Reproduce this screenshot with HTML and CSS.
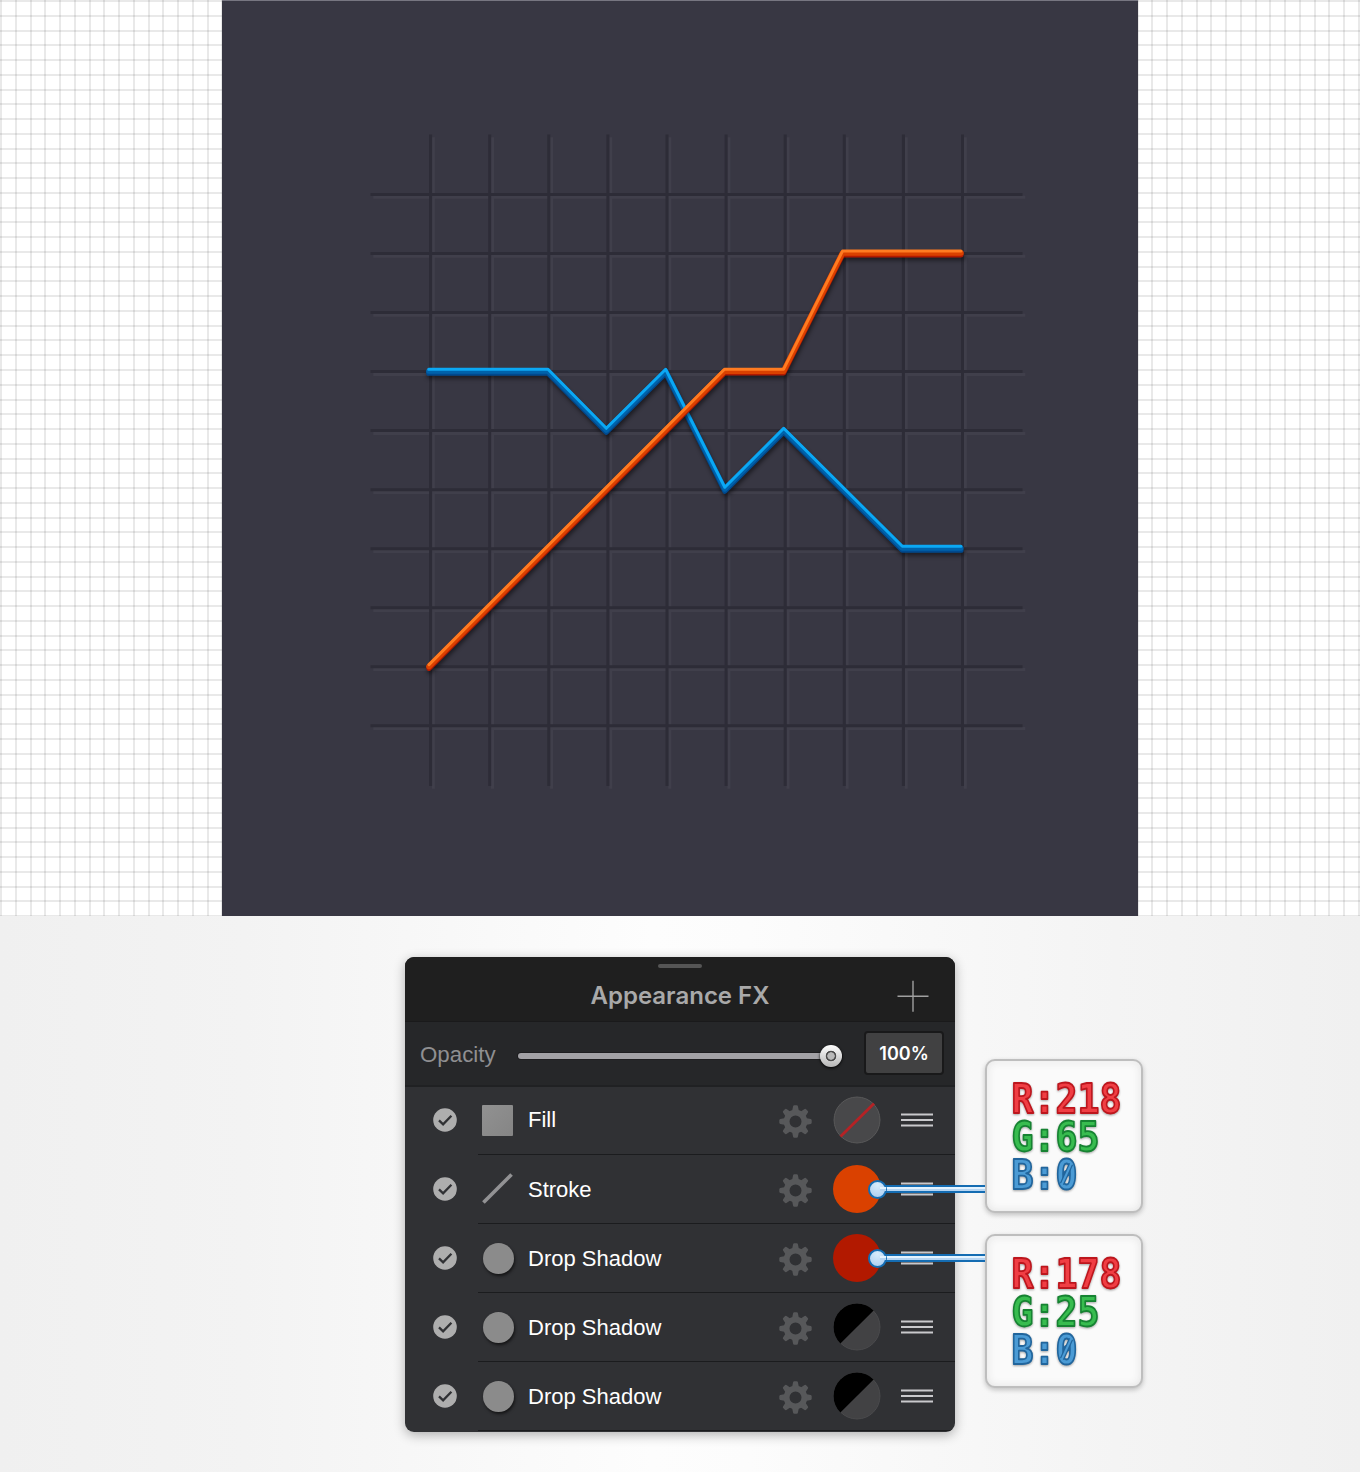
FILE: index.html
```html
<!DOCTYPE html>
<html lang="en">
<head>
<meta charset="utf-8">
<title>Appearance FX</title>
<link rel="stylesheet" href="styles.css">
</head>
<body>
<svg class="defs" width="0" height="0" aria-hidden="true">
  <defs>
    <symbol id="check" viewBox="0 0 24 24"><circle cx="12" cy="12" r="11.8" fill="#aeaeae"/><path d="M6 12.4l4.1 4 8.3-8.6" fill="none" stroke="#303134" stroke-width="2.3"/></symbol>
    <symbol id="gear" viewBox="-16.5 -16.5 33 33">
      <g fill="#57585a">
        <path id="tooth" d="M-3.5-10L-2.4-15.2Q-2.2-16.2-1.2-16.2H1.2Q2.2-16.2 2.4-15.2L3.5-10Z"/>
        <use href="#tooth" transform="rotate(45)"/><use href="#tooth" transform="rotate(90)"/><use href="#tooth" transform="rotate(135)"/><use href="#tooth" transform="rotate(180)"/><use href="#tooth" transform="rotate(225)"/><use href="#tooth" transform="rotate(270)"/><use href="#tooth" transform="rotate(315)"/>
      </g>
      <circle r="8.9" fill="none" stroke="#57585a" stroke-width="5.8"/>
    </symbol>
    <symbol id="grip" viewBox="0 0 32 14"><path d="M0 1.5h32M0 7h32M0 12.5h32" stroke="#c9c9cc" stroke-width="2"/></symbol>
    <symbol id="half" viewBox="0 0 48 48"><circle cx="24" cy="24" r="23" fill="#424244" stroke="#4b4b4d"/><path d="M7.4 40.6A23 23 0 0 1 40.6 7.4Z" fill="#000"/></symbol>
  </defs>
</svg>

<section class="canvas">
  <svg class="artboard" viewBox="222 0 916 916">
    <defs>
      <path id="grid" d="M430.6 134.5V786M489.7 134.5V786M548.8 134.5V786M607.9 134.5V786M667 134.5V786M726.1 134.5V786M785.2 134.5V786M844.3 134.5V786M903.4 134.5V786M962.5 134.5V786M370.5 194.4H1022.5M370.5 253.5H1022.5M370.5 312.5H1022.5M370.5 371.6H1022.5M370.5 430.6H1022.5M370.5 489.7H1022.5M370.5 548.7H1022.5M370.5 607.8H1022.5M370.5 666.8H1022.5M370.5 725.8H1022.5"/>
      <path id="blue" d="M428.7 370.5H548L606.3 429.5L665.7 370.500L724.8 488.5L783.7 429.5L902.3 547.5H961"/>
      <path id="orange" d="M429 665.8L724.5 370.500H783.5L842.5 252.300H961"/>
      <filter id="soft" x="-10%" y="-10%" width="120%" height="125%"><feGaussianBlur stdDeviation="2"/></filter>
    </defs>
    <path d="M222 .5H1138" stroke="#777681"/>
    <g class="grid-lines">
      <use href="#grid" x="2.8" y="2.8" stroke="#403f4b"/>
      <use href="#grid" stroke="#2d2c37"/>
    </g>
    <g class="series">
      <use href="#blue" y="5" x="1" stroke="#000" stroke-width="6" opacity=".5" filter="url(#soft)"/>
      <use href="#blue" y="2.7" stroke="#00498e" stroke-width="5.2"/>
      <use href="#blue" y=".6" stroke="#0062aa" stroke-width="5.2"/>
      <use href="#blue" y="-1.2" stroke="#0ba8f4" stroke-width="3"/>
    </g>
    <g class="series">
      <use href="#orange" y="5" x="1" stroke="#000" stroke-width="6" opacity=".5" filter="url(#soft)"/>
      <use href="#orange" y="2.5" stroke="#b21900" stroke-width="5.2"/>
      <use href="#orange" y=".7" stroke="#da4100" stroke-width="5.6"/>
      <use href="#orange" y="-1.2" stroke="#ff7b21" stroke-width="3"/>
    </g>
  </svg>
</section>

<main class="stage">
  <section class="panel">
    <header class="panel-head">
      <i class="handle"></i>
      <h1>Appearance FX</h1>
      <svg class="add" viewBox="0 0 32 32"><path d="M.5 16.2h31M16 .7v31" stroke="#a0a0a0" stroke-width="1.4"/></svg>
    </header>
    <div class="opacity">
      <span class="opacity-label">Opacity</span>
      <div class="slider"><i class="knob"></i></div>
      <span class="value">100%</span>
    </div>
    <ul class="effects">
      <li><svg class="check"><use href="#check"/></svg><div class="effect"><i class="sample square"></i><span>Fill</span><svg class="gear"><use href="#gear"/></svg><svg class="swatch" viewBox="0 0 48 48"><circle cx="24" cy="24" r="23" fill="#48484a" stroke="#59595a"/><path d="M7.5 40.5L41 7.5" stroke="#b52225" stroke-width="2.8"/></svg><svg class="grip"><use href="#grip"/></svg></div></li>
      <li><svg class="check"><use href="#check"/></svg><div class="effect"><svg class="sample" viewBox="0 0 32 32"><path d="M1.5 30.5L30.5 1.5" stroke="#929294" stroke-width="3.8"/></svg><span>Stroke</span><svg class="gear"><use href="#gear"/></svg><i class="swatch orange"></i><svg class="grip"><use href="#grip"/></svg></div></li>
      <li><svg class="check"><use href="#check"/></svg><div class="effect"><i class="sample disc"></i><span>Drop Shadow</span><svg class="gear"><use href="#gear"/></svg><i class="swatch red"></i><svg class="grip"><use href="#grip"/></svg></div></li>
      <li><svg class="check"><use href="#check"/></svg><div class="effect"><i class="sample disc"></i><span>Drop Shadow</span><svg class="gear"><use href="#gear"/></svg><svg class="swatch"><use href="#half"/></svg><svg class="grip"><use href="#grip"/></svg></div></li>
      <li><svg class="check"><use href="#check"/></svg><div class="effect"><i class="sample disc"></i><span>Drop Shadow</span><svg class="gear"><use href="#gear"/></svg><svg class="swatch"><use href="#half"/></svg><svg class="grip"><use href="#grip"/></svg></div></li>
    </ul>
  </section>

  <div class="callout first">
    <i class="leader"></i>
    <svg class="rgb" viewBox="0 0 154 150">
      <text class="r" x="24.5" y="51.5" textLength="110" lengthAdjust="spacingAndGlyphs">R:218</text>
      <text class="g" x="24.5" y="89.5" textLength="88" lengthAdjust="spacingAndGlyphs">G:65</text>
      <text class="b" x="24.5" y="127.5" textLength="66" lengthAdjust="spacingAndGlyphs">B:0</text>
      <path class="zero-edge" d="M75 123L84 103"/><path class="zero" d="M74.500 124L84.500 102"/>
    </svg>
  </div>
  <div class="callout second">
    <i class="leader"></i>
    <svg class="rgb" viewBox="0 0 154 150">
      <text class="r" x="24.5" y="51.5" textLength="110" lengthAdjust="spacingAndGlyphs">R:178</text>
      <text class="g" x="24.5" y="89.5" textLength="88" lengthAdjust="spacingAndGlyphs">G:25</text>
      <text class="b" x="24.5" y="127.5" textLength="66" lengthAdjust="spacingAndGlyphs">B:0</text>
      <path class="zero-edge" d="M75 123L84 103"/><path class="zero" d="M74.500 124L84.500 102"/>
    </svg>
  </div>
</main>
</body>
</html>
```
FILE: styles.css
```css
* { box-sizing: border-box; }
body { margin: 0; width: 1360px; font-family: "Liberation Sans", Arial, sans-serif; }
.defs { position: absolute; }

.canvas {
  height: 916px;
  display: flex;
  justify-content: center;
  background:
    repeating-linear-gradient(90deg, rgba(0,0,0,.085) 0 2px, transparent 2px 14.76px),
    repeating-linear-gradient(180deg, rgba(0,0,0,.085) 0 2px, transparent 2px 14.76px),
    #fff;
}
.artboard { width: 916px; height: 916px; background: #383743; }
.grid-lines { fill: none; stroke-width: 3; }
.series { fill: none; stroke-linecap: round; stroke-linejoin: round; }

.stage {
  position: relative;
  height: 556px;
  display: flex;
  justify-content: center;
  align-items: flex-start;
  padding-top: 41px;
  background: linear-gradient(90deg, #f0f0f0 0%, #f3f3f3 18%, #fdfdfd 48%, #fcfcfc 55%, #f4f4f4 82%, #f0f0f0 100%);
}
.panel {
  width: 550px;
  height: 474.5px;
  border-radius: 9px;
  overflow: hidden;
  background: #303134;
  box-shadow: 0 3px 12px rgba(0,0,0,.3);
}
.panel-head {
  height: 65px;
  display: grid;
  grid-template-columns: 1fr auto 1fr;
  grid-template-rows: 11px 1fr;
  align-items: center;
  background: #1f1f1f;
  border-bottom: 1px solid #1a1a1b;
}
.handle { grid-column: 1 / -1; justify-self: center; width: 44px; height: 4px; margin-top: 6px; border-radius: 2px; background: #555; }
.panel-head h1 { grid-column: 2; margin: 0; padding-top: 3px; font: 600 24px/30px Inter, sans-serif; color: #a9a9a9; }
.add { width: 32px; height: 32px; justify-self: end; margin-right: 26px; margin-top: 3px; }

.opacity { height: 64.5px; display: flex; align-items: center; padding: 2px 11px 0 15px; background: #262729; border-bottom: 2px solid #202123; }
.opacity-label { width: 98px; padding-top: 2px; font-size: 22.3px; color: #8f8f91; }
.slider { width: 324px; height: 6px; margin-top: 3px; border-radius: 3px; background: #a2a1a5; box-shadow: 0 0 0 1px #1d1d1f; display: flex; justify-content: flex-end; align-items: center; }
.knob { flex: none; width: 22px; height: 22px; border-radius: 50%; background: radial-gradient(circle, #b9b9b9 0 3.4px, #4c4c4c 4px 5px, transparent 5.6px), linear-gradient(#fff, #b6b6b6); box-shadow: 0 1px 3px #000; }
.value { width: 80px; height: 44px; margin-left: auto; margin-top: -2px; border: 2px solid #19191a; border-radius: 4px; background: #414142; color: #fff; font: 600 18px/41px Inter, sans-serif; text-align: center; }

.effects { margin: 0; padding: 0; list-style: none; }
.effects li { height: 69px; display: flex; align-items: center; padding-left: 27.5px; }
.effects li:first-child { height: 68px; }
.check { width: 24px; height: 24px; margin: -1px 21.5px 0 0; }
.effect { flex: 1; height: 100%; display: flex; align-items: center; padding: 0 22px 0 4px; border-bottom: 1px solid #1b1c1e; color: #fff; font-size: 22px; }
.effect span { flex: 1; margin-left: 15px; padding-top: 2px; }
li:first-child .effect span { padding-top: 0; }
.sample { width: 31px; height: 31px; }
.square { background: linear-gradient(135deg, #919191, #858585); border-radius: 1px; }
.disc { border-radius: 50%; background: #8b8b8b; margin: 1px -.5px 0 .5px; box-shadow: 1px 2px 3px #151516; }
.gear { width: 33px; height: 33px; margin: 3px 21px 0 0; }
.swatch { width: 48px; height: 48px; margin: 0 20px 0 0; border-radius: 50%; }
.orange { background: #da4100; }
.red { background: #b21900; }
.grip { width: 32px; height: 14px; }

.callout {
  position: absolute;
  left: 985px;
  width: 158px;
  height: 154px;
  border: 2px solid #bebebe;
  border-radius: 10px;
  background: #fafafa;
  box-shadow: inset 0 0 8px #e2e2e2, inset 0 2px 2px #fff, 0 2px 5px rgba(0,0,0,.22);
}
.first { top: 143px; }
.second { top: 318px; }
.leader { position: absolute; left: -112px; width: 110px; height: 8px; border: solid #146cb2; border-width: 2px 0; background: linear-gradient(#e3f3ff 50%, #b5d5f3 50%); }
.first .leader { top: 124px; }
.second .leader { top: 18px; }
.leader::before { content: ""; position: absolute; left: -5px; top: -6px; width: 15px; height: 15px; border: 2.5px solid #146cb2; border-radius: 50%; background: radial-gradient(circle at 50% 20%, #d8ecfc, #aaccf0); }
.leader::before { transform: translate(-2px, -1px); }
.leader::after { content: ""; position: absolute; left: 5px; top: 0; width: 6px; height: 4px; background: linear-gradient(#e3f3ff 50%, #b5d5f3 50%); }
.rgb { display: block; width: 154px; height: 150px; font: 700 41px "DejaVu Sans Mono", monospace; filter: drop-shadow(0 1px 1px rgba(0,0,0,.35)); }
.rgb text { stroke-width: 1.8px; stroke-linejoin: round; }
.r { fill: #f03e44; stroke: #bd161d; }
.g { fill: #38bc4f; stroke: #168332; }
.b { fill: #4b9bd5; stroke: #21659c; }
.zero-edge { stroke: #21659c; stroke-width: 4.5px; }
.zero { stroke: #4b9bd5; stroke-width: 2px; }
```
